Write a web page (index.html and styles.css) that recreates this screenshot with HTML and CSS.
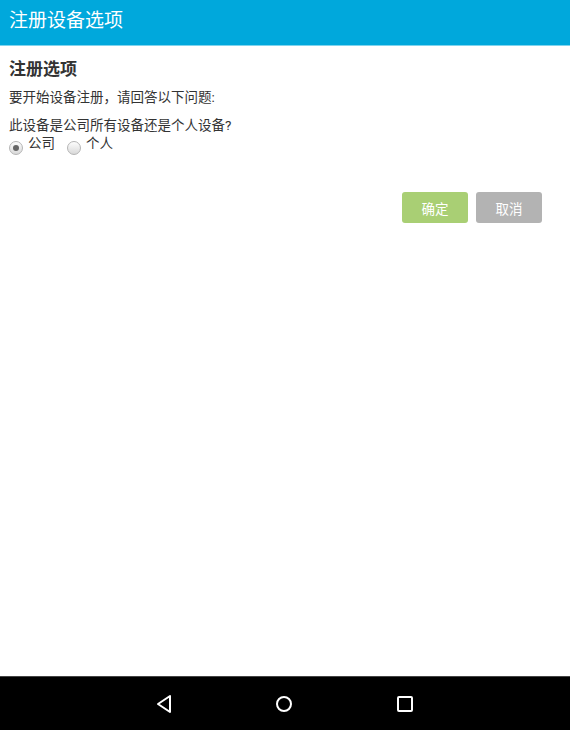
FILE: index.html
```html
<!DOCTYPE html>
<html lang="zh-CN">
<head>
    <meta charset="UTF-8">
    <meta name="viewport" content="width=device-width, initial-scale=1.0">
    <title>注册设备选项</title>
    <link rel="stylesheet" href="styles.css">
</head>
<body>
    <div class="screen">
        <header class="topbar">注册设备选项</header>
        <main class="content">
            <h2 class="title">注册选项</h2>
            <p class="intro">要开始设备注册，请回答以下问题:</p>
            <p class="question">此设备是公司所有设备还是个人设备?</p>
            <div class="choices">
                <label class="choice"><span class="radio checked"></span>公司</label>
                <label class="choice"><span class="radio"></span>个人</label>
            </div>
            <div class="actions">
                <button class="btn ok">确定</button>
                <button class="btn cancel">取消</button>
            </div>
        </main>
        <nav class="navbar">
            <svg width="18" height="20" viewBox="0 0 18 20"><path d="M15 2 L3 10 L15 18 Z" fill="none" stroke="#fff" stroke-width="2" stroke-linejoin="round"/></svg>
            <svg width="20" height="20" viewBox="0 0 20 20"><circle cx="10" cy="10" r="7" fill="none" stroke="#fff" stroke-width="2"/></svg>
            <svg width="20" height="20" viewBox="0 0 20 20"><rect x="3" y="3" width="14" height="14" rx="1" fill="none" stroke="#fff" stroke-width="2"/></svg>
        </nav>
    </div>
</body>
</html>
```

FILE: styles.css
```css
* {
    box-sizing: border-box;
}
body {
    margin: 0;
    font-family: 'Roboto', 'Noto Sans CJK SC', sans-serif;
    color: #333;
    background: #fff;
}
.screen {
    width: 570px;
    height: 730px;
    display: flex;
    flex-direction: column;
}
.topbar {
    height: 46px;
    background: #00a8dc;
    border-bottom: 1px solid #7fd4ee;
    color: #fff;
    font-size: 19px;
    line-height: 42px;
    padding-left: 9px;
}
.content {
    flex: 1;
    padding: 0 9px;
}
.title {
    font-size: 17px;
    font-weight: bold;
    margin: 12px 0 0;
    line-height: 22px;
}
.intro, .question {
    font-size: 13.5px;
    margin: 0;
    line-height: 18px;
}
.intro {
    margin-top: 8px;
}
.question {
    margin-top: 10px;
}
.choices {
    display: flex;
    gap: 12px;
    font-size: 13.5px;
    line-height: 16px;
    margin-top: 1px;
}
.choice {
    display: flex;
    align-items: flex-start;
}
.radio {
    width: 14px;
    height: 14px;
    border-radius: 50%;
    border: 1px solid #b5b5b5;
    background: linear-gradient(#fdfdfd, #d9d9d9);
    margin: 6px 5px 0 0;
    position: relative;
}
.radio.checked::after {
    content: '';
    position: absolute;
    left: 3px;
    top: 3px;
    width: 6px;
    height: 6px;
    border-radius: 50%;
    background: #666;
}
.actions {
    display: flex;
    justify-content: flex-end;
    gap: 8px;
    margin-top: 37px;
    padding-right: 19px;
}
.btn {
    width: 66px;
    height: 31px;
    border: none;
    border-radius: 3px;
    color: #fff;
    font-family: 'Roboto', 'Noto Sans CJK SC', sans-serif;
    font-size: 13.5px;
}
.ok {
    background: #a9cf74;
}
.cancel {
    background: #b3b3b3;
}
.navbar {
    height: 54px;
    background: #000;
    border-top: 1px solid #444;
    display: flex;
    justify-content: center;
    align-items: center;
    gap: 101px;
}
```
